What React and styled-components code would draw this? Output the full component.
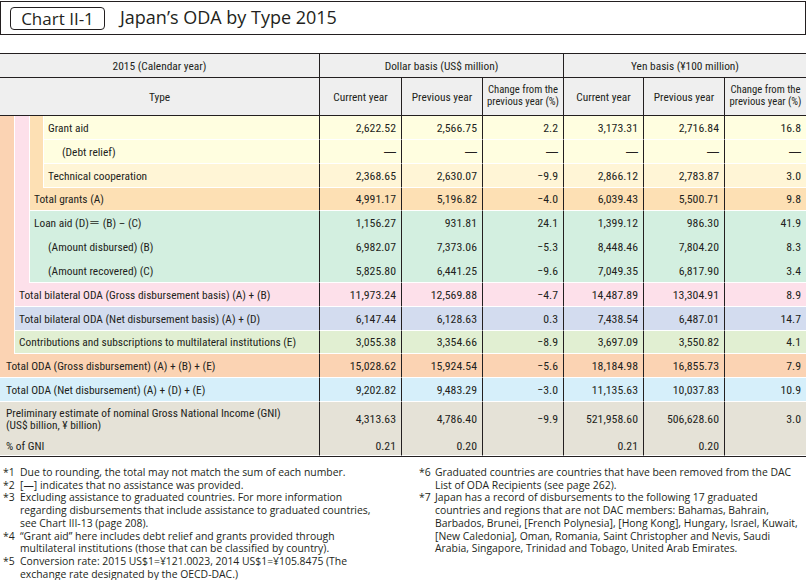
import React from "react";
import styled, { createGlobalStyle } from "styled-components";

const GlobalStyle = createGlobalStyle`
  html, body {
    margin: 0;
    padding: 0;
    background: #fff;
  }
  body {
    font-family: "Open Sans", "Noto Sans", sans-serif;
    color: #231f20;
  }
`;

const ink = "#231f20";
const colors = {
  head: "#efefef",
  peach: "#fbd3b3",
  pink: "#fde0ea",
  tan: "#fde0b4",
  yellow: "#fffee0",
  cream: "#fff5d6",
  green: "#d3efe0",
  blue: "#d3dcef",
  lime: "#e1efd2",
  cyan: "#d6effa",
  gni: "#e5e2d7",
};

const D = "—";

const rows = [
  { label: "Grant aid", col: 4, bg: colors.yellow, v: ["2,622.52", "2,566.75", "2.2", "3,173.31", "2,716.84", "16.8"] },
  { label: "(Debt relief)", col: 4, sub: true, bg: colors.yellow, v: [D, D, D, D, D, D] },
  { label: "Technical cooperation", col: 4, bg: colors.cream, v: ["2,368.65", "2,630.07", "−9.9", "2,866.12", "2,783.87", "3.0"] },
  { label: "Total grants (A)", col: 3, bg: colors.tan, v: ["4,991.17", "5,196.82", "−4.0", "6,039.43", "5,500.71", "9.8"] },
  { label: "Loan aid (D)＝ (B) – (C)", col: 3, join: true, bg: colors.green, v: ["1,156.27", "931.81", "24.1", "1,399.12", "986.30", "41.9"] },
  { label: "(Amount disbursed) (B)", col: 3, sub: true, join: true, bg: colors.green, v: ["6,982.07", "7,373.06", "−5.3", "8,448.46", "7,804.20", "8.3"] },
  { label: "(Amount recovered) (C)", col: 3, sub: true, bg: colors.green, v: ["5,825.80", "6,441.25", "−9.6", "7,049.35", "6,817.90", "3.4"] },
  { label: "Total bilateral ODA (Gross disbursement basis) (A) + (B)", col: 2, bg: colors.pink, v: ["11,973.24", "12,569.88", "−4.7", "14,487.89", "13,304.91", "8.9"] },
  { label: "Total bilateral ODA (Net disbursement basis) (A) + (D)", col: 2, bg: colors.blue, v: ["6,147.44", "6,128.63", "0.3", "7,438.54", "6,487.01", "14.7"] },
  { label: "Contributions and subscriptions to multilateral institutions (E)", col: 2, bg: colors.lime, v: ["3,055.38", "3,354.66", "−8.9", "3,697.09", "3,550.82", "4.1"] },
  { label: "Total ODA (Gross disbursement) (A) + (B) + (E)", col: 1, bg: colors.peach, v: ["15,028.62", "15,924.54", "−5.6", "18,184.98", "16,855.73", "7.9"] },
  { label: "Total ODA (Net disbursement) (A) + (D) + (E)", col: 1, bg: colors.cyan, v: ["9,202.82", "9,483.29", "−3.0", "11,135.63", "10,037.83", "10.9"] },
  { label: ["Preliminary estimate of nominal Gross National Income (GNI)", "(US$ billion, ¥ billion)"], col: 1, join: true, bg: colors.gni, v: ["4,313.63", "4,786.40", "−9.9", "521,958.60", "506,628.60", "3.0"] },
  { label: "% of GNI", col: 1, bg: colors.gni, v: ["0.21", "0.20", "", "0.21", "0.20", ""] },
];

const notesLeft = [
  ["*1", ["Due to rounding, the total may not match the sum of each number."]],
  ["*2", ["[—] indicates that no assistance was provided."]],
  ["*3", [
    "Excluding assistance to graduated countries. For more information",
    "regarding disbursements that include assistance to graduated countries,",
    "see Chart III-13 (page 208).",
  ]],
  ["*4", [
    "“Grant aid” here includes debt relief and grants provided through",
    "multilateral institutions (those that can be classified by country).",
  ]],
  ["*5", [
    "Conversion rate: 2015 US$1=¥121.0023, 2014 US$1=¥105.8475 (The",
    "exchange rate designated by the OECD-DAC.)",
  ]],
];

const notesRight = [
  ["*6", [
    "Graduated countries are countries that have been removed from the DAC",
    "List of ODA Recipients (see page 262).",
  ]],
  ["*7", [
    "Japan has a record of disbursements to the following 17 graduated",
    "countries and regions that are not DAC members: Bahamas, Bahrain,",
    "Barbados, Brunei, [French Polynesia], [Hong Kong], Hungary, Israel, Kuwait,",
    "[New Caledonia], Oman, Romania, Saint Christopher and Nevis, Saudi",
    "Arabia, Singapore, Trinidad and Tobago, United Arab Emirates.",
  ]],
];

function NoteList({ items, right }) {
  return (
    <NoteColumn $right={right}>
      {items.map(([mark, lines]) => (
        <Note key={mark}>
          <Mark $right={right}>{mark}</Mark>
          <NoteText>
            {lines.map((l, k) => (
              <div key={k}>{l}</div>
            ))}
          </NoteText>
        </Note>
      ))}
    </NoteColumn>
  );
}

export default function App() {
  const firstBody = 3;
  return (
    <Page>
      <GlobalStyle />
      <TitleBar>
        <ChartTag>Chart II-1</ChartTag>
        <Title>Japan’s ODA by Type 2015</Title>
      </TitleBar>

      <Grid>
        <Head $col={1} $span={4} $row={1}>2015 (Calendar year)</Head>
        <Head $col={5} $span={3} $row={1} $line>Dollar basis (US$ million)</Head>
        <Head $col={8} $span={3} $row={1} $line>Yen basis (¥100 million)</Head>

        <Head $col={1} $span={4} $row={2}>Type</Head>
        <Head $col={5} $row={2} $line>Current year</Head>
        <Head $col={6} $row={2} $line>Previous year</Head>
        <Head $col={7} $row={2} $line $small>Change from the<br />previous year (%)</Head>
        <Head $col={8} $row={2} $line>Current year</Head>
        <Head $col={9} $row={2} $line>Previous year</Head>
        <Head $col={10} $row={2} $line $small>Change from the<br />previous year (%)</Head>

        <Stripe $col={1} $row={firstBody} $rows={10} $bg={colors.peach} />
        <Stripe $col={2} $row={firstBody} $rows={7} $bg={colors.pink} $gap />
        <Stripe $col={3} $row={firstBody} $rows={3} $bg={colors.tan} $gap />

        {rows.map((r, i) => (
          <React.Fragment key={i}>
            <Label
              $col={r.col}
              $span={5 - r.col}
              $row={firstBody + i}
              $bg={r.bg}
              $join={r.join}
              $sub={r.sub}
              $gap={r.col > 1}
            >
              {Array.isArray(r.label) ? (
                <span>
                  {r.label[0]}
                  <br />
                  {r.label[1]}
                </span>
              ) : (
                r.label
              )}
            </Label>
            {r.v.map((val, j) => (
              <Num key={j} $col={5 + j} $row={firstBody + i} $bg={r.bg} $join={r.join}>
                {val === D ? <Dash>{D}</Dash> : val}
              </Num>
            ))}
          </React.Fragment>
        ))}
      </Grid>

      <Notes>
        <NoteList items={notesLeft} />
        <NoteList items={notesRight} right />
      </Notes>
    </Page>
  );
}

const Page = styled.div`
  width: 806px;
  padding-top: 1px;
`;

const TitleBar = styled.header`
  display: flex;
  align-items: center;
  gap: 15px;
  height: 34px;
  box-sizing: border-box;
  border: 1.5px solid ${ink};
  padding-left: 9px;
`;

const ChartTag = styled.span`
  display: flex;
  align-items: center;
  justify-content: center;
  box-sizing: border-box;
  width: 95px;
  height: 23px;
  border: 1px solid ${ink};
  border-radius: 4px;
  font-size: 17px;
  line-height: 1;
`;

const Title = styled.h1`
  margin: 0 0 2px;
  font-size: 18px;
  font-weight: 400;
`;

const Grid = styled.div`
  margin-top: 18px;
  display: grid;
  grid-template-columns: 14px 15px 14px 276px 82px 81px 81px 80px 81px 82px;
  grid-template-rows: 24px 38px 24px 24px 24px 23px 24px 24px 24px 24px 24px 23px 24px 24px 34px 20px;
  border-top: 1px solid ${ink};
  border-bottom: 1px solid ${ink};
  font-family: "Liberation Sans Narrow", "Roboto Condensed", "Liberation Sans", "Noto Sans CJK JP", sans-serif;
  font-size: 11.4px;
  color: ${ink};
`;

const Cell = styled.div`
  box-sizing: border-box;
  grid-column: ${(p) => p.$col} / span ${(p) => p.$span || 1};
  grid-row: ${(p) => p.$row} / span ${(p) => p.$rows || 1};
  display: flex;
  align-items: center;
  white-space: nowrap;
  overflow: hidden;
`;

const Head = styled(Cell)`
  justify-content: center;
  text-align: center;
  background: ${colors.head};
  border-bottom: 1px solid ${ink};
  border-left: ${(p) => (p.$line ? `1px solid ${ink}` : "none")};
  font-size: ${(p) => (p.$small ? "10.7px" : "11.4px")};
  line-height: ${(p) => (p.$small ? "12px" : "14px")};
  padding-bottom: ${(p) => (p.$small ? "2px" : "0")};
`;

const Stripe = styled(Cell)`
  background: ${(p) => p.$bg};
  border-left: ${(p) => (p.$gap ? "1px solid #fff" : "none")};
`;

const Label = styled(Cell)`
  background: ${(p) => p.$bg};
  border-left: ${(p) => (p.$gap ? "1px solid #fff" : "none")};
  border-bottom: ${(p) => (p.$join ? "none" : "1px solid #fff")};
  padding-left: ${(p) => (p.$sub ? 18 : p.$gap ? 4 : 6)}px;
  line-height: 12px;
`;

const Num = styled(Cell)`
  justify-content: flex-end;
  padding-right: 5px;
  background: ${(p) => p.$bg};
  border-left: 1px solid ${ink};
  border-bottom: ${(p) => (p.$join ? "none" : "1px solid #fff")};
  font-size: 11.8px;
`;

const Dash = styled.span`
  font-family: "Liberation Sans", sans-serif;
  font-size: 12px;
`;

const Notes = styled.section`
  display: grid;
  grid-template-columns: 419px 1fr;
  margin-top: 9px;
  font-size: 10.4px;
  line-height: 12.7px;
`;

const NoteColumn = styled.div`
  padding-left: ${(p) => (p.$right ? "0" : "3px")};
`;

const Note = styled.div`
  display: flex;
`;

const Mark = styled.span`
  flex: none;
  width: ${(p) => (p.$right ? "16px" : "17px")};
`;

const NoteText = styled.div`
  white-space: nowrap;
`;
